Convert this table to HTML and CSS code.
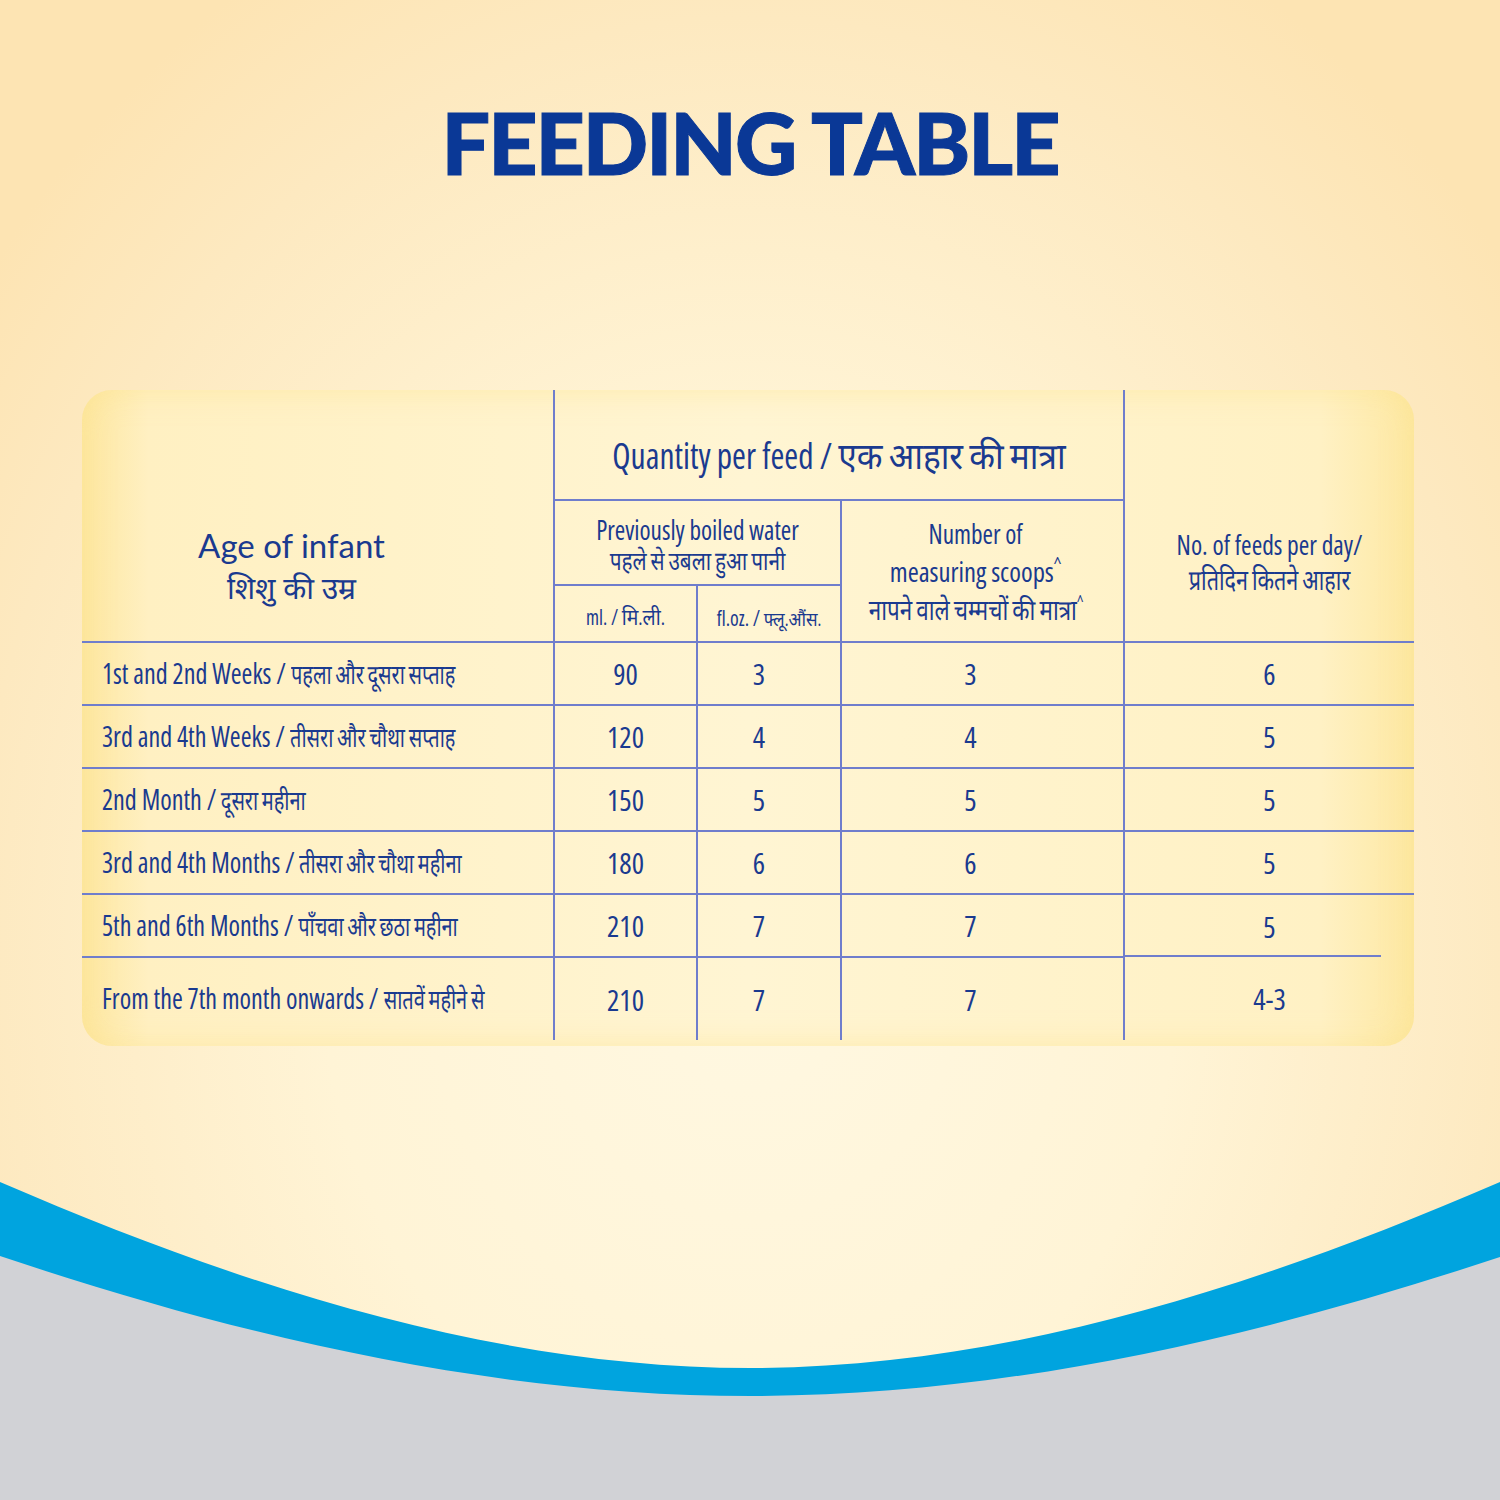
FILE: index.html
```html
<!DOCTYPE html>
<html lang="en">
<head>
<meta charset="utf-8">
<title>Feeding Table</title>
<link rel="stylesheet" href="styles.css">
</head>
<body>
<div class="page">
  <h1 class="title">FEEDING TABLE</h1>
  <div class="card">
    <table class="feed">
      <colgroup>
        <col class="c-age"><col class="c-ml"><col class="c-oz"><col class="c-scoop"><col class="c-feeds">
      </colgroup>
      <thead>
        <tr class="h1">
          <th rowspan="3" class="age"><span class="en">Age of infant</span><span class="hi">शिशु की उम्र</span></th>
          <th colspan="3" class="qty cond"><span class="bl s93">Quantity per feed / एक आहार की मात्रा</span></th>
          <th rowspan="3" class="feeds cond"><span class="bl s91">No. of feeds per day/</span><span class="bl s77">प्रतिदिन कितने आहार</span></th>
        </tr>
        <tr class="h2">
          <th colspan="2" class="water cond"><span class="bl s90">Previously boiled water</span><span class="bl s80 wh">पहले से उबला हुआ पानी</span></th>
          <th rowspan="2" class="scoops cond"><span class="bl ln s90">Number of</span><span class="bl ln s95">measuring scoops<sup class="caret">^</sup></span><span class="bl ln s80">नापने वाले चम्मचों की मात्रा<sup class="caret">^</sup></span></th>
        </tr>
        <tr class="h3">
          <th class="ml cond"><span class="bl s88">ml. / मि.ली.</span></th>
          <th class="oz cond"><span class="bl s90">fl.oz. / <span class="sm">फ्लू.औंस.</span></span></th>
        </tr>
      </thead>
      <tbody class="cond">
        <tr><td class="lbl"><span class="lt">1st and 2nd Weeks / <span class="dv">पहला और दूसरा सप्ताह</span></span></td><td>90</td><td class="n2">3</td><td class="n3">3</td><td>6</td></tr>
        <tr><td class="lbl"><span class="lt">3rd and 4th Weeks / <span class="dv">तीसरा और चौथा सप्ताह</span></span></td><td>120</td><td class="n2">4</td><td class="n3">4</td><td>5</td></tr>
        <tr><td class="lbl"><span class="lt">2nd Month / <span class="dv">दूसरा महीना</span></span></td><td>150</td><td class="n2">5</td><td class="n3">5</td><td>5</td></tr>
        <tr><td class="lbl"><span class="lt">3rd and 4th Months / <span class="dv">तीसरा और चौथा महीना</span></span></td><td>180</td><td class="n2">6</td><td class="n3">6</td><td>5</td></tr>
        <tr class="r5"><td class="lbl"><span class="lt">5th and 6th Months / <span class="dv">पाँचवा और छठा महीना</span></span></td><td>210</td><td class="n2">7</td><td class="n3">7</td><td class="short">5</td></tr>
        <tr class="last"><td class="lbl"><span class="lt">From the 7th month onwards / <span class="dv">सातवें महीने से</span></span></td><td>210</td><td class="n2">7</td><td class="n3">7</td><td>4-3</td></tr>
      </tbody>
    </table>
  </div>
  <svg class="wave" viewBox="0 0 1500 350" width="1500" height="350" aria-hidden="true">
    <path d="M0 32 C 250 140, 500 218, 750 218 C 1000 218, 1250 140, 1500 32 L1500 350 L0 350 Z" fill="#00a4df"/>
    <path d="M0 106 C 250 190, 500 246, 750 246 C 1000 246, 1250 190, 1500 107 L1500 350 L0 350 Z" fill="#d1d2d6"/>
  </svg>
</div>
</body>
</html>
```

FILE: styles.css
```css
* { box-sizing: border-box; }
html, body { margin: 0; padding: 0; }
body {
  width: 1500px;
  height: 1500px;
  overflow: hidden;
  background:
    radial-gradient(ellipse 950px 1150px at 50% 64%, #fff8e2 0%, #fff4d6 45%, #fde9c0 82%, #fde4b3 100%);
  font-family: "Open Sans", "Noto Sans Devanagari", "Lohit Devanagari", "FreeSans", sans-serif;
  color: #1a3a8f;
}
.page {
  height: 1500px;
  display: flex;
  flex-direction: column;
}
.title {
  margin: 99px 0 0;
  font-family: "Lato", sans-serif;
  font-weight: 900;
  font-size: 86px;
  line-height: 86px;
  letter-spacing: -2px;
  text-align: center;
  color: #0a3896;
  -webkit-text-stroke: 1px #0a3896;
}
.card {
  margin: 205px 0 0 82px;
  width: 1332px;
  height: 656px;
  border-radius: 30px;
  background: linear-gradient(90deg, #fde7a0 0%, #fff0c2 5%, #fff5d3 50%, #fff1c4 93%, #fde8a2 100%);
  box-shadow: inset 0 0 30px rgba(253, 226, 140, 0.55);
}
.feed {
  border-collapse: collapse;
  table-layout: fixed;
  width: 1332px;
}
.c-age { width: 472px; }
.c-ml { width: 143px; }
.c-oz { width: 144px; }
.c-scoop { width: 283px; }
.c-feeds { width: 290px; }

.feed th, .feed td {
  padding: 0;
  text-align: center;
  vertical-align: middle;
  font-weight: 400;
  white-space: nowrap;
  color: #1a3a8f;
}
.cond {
  font-family: "Open Sans", "Noto Sans Devanagari", "Lohit Devanagari", sans-serif;
  font-stretch: 75%;
}
.bl { display: block; transform-origin: 50% 50%; }
.s95 { transform: scaleX(0.95); }
.s93 { transform: scaleX(0.93); }
.s91 { transform: scaleX(0.91); }
.s90 { transform: scaleX(0.90); }
.s88 { transform: scaleX(0.88); }
.s80 { transform: scaleX(0.80); }
.s77 { transform: scaleX(0.77); }

.h1 { height: 110px; }
.h2 { height: 85px; }
.h3 { height: 57px; }
.feed tbody tr { height: 63px; }
.feed tbody tr.last { height: 83px; }

.feed th.age {
  border-right: 2px solid #6f7dcc;
  border-bottom: 2px solid #6f7dcc;
  font-family: "Lato", "Noto Sans Devanagari", sans-serif;
  padding: 100px 52px 0 0;
}
.age .en, .age .hi { display: block; font-size: 33px; line-height: 42px; }
.age .hi { font-size: 30px; }
.feed th.qty {
  border-right: 2px solid #6f7dcc;
  border-bottom: 2px solid #6f7dcc;
  font-size: 36px;
  padding-top: 26px;
}
.feed th.feeds {
  border-bottom: 2px solid #6f7dcc;
  font-size: 28px;
  line-height: 35px;
  padding-top: 92px;
}
.feed th.water {
  border-right: 2px solid #6f7dcc;
  border-bottom: 2px solid #6f7dcc;
  font-size: 28px;
  line-height: 30px;
  padding-top: 4px;
}
.water .wh { font-size: 26px; line-height: 32px; }
.feed th.scoops {
  border-right: 2px solid #6f7dcc;
  border-bottom: 2px solid #6f7dcc;
  font-size: 28px;
  padding-right: 14px;
}
.scoops .ln { line-height: 38px; }
.caret { font-size: 18px; vertical-align: 12px; line-height: 0; }
.feed th.ml, .feed th.oz {
  border-right: 2px solid #6f7dcc;
  border-bottom: 2px solid #6f7dcc;
  font-size: 22px;
  padding-top: 8px;
}
.sm { font-size: 19px; }

.feed tbody td {
  font-size: 29px;
  border-right: 2px solid #6f7dcc;
  border-bottom: 2px solid #6f7dcc;
}
.feed tbody td:last-child { border-right: none; }
.feed tbody tr.last td { border-bottom: none; }
.feed tbody td.lbl { text-align: left; padding-left: 20px; }
.lt {
  display: inline-block;
  transform: scaleX(0.9);
  transform-origin: 0 50%;
}
.dv {
  display: inline-block;
  font-size: 27px;
  transform: scaleX(0.82);
  transform-origin: 0 50%;
}
.feed tbody td.n2 { padding-right: 20px; }
.feed tbody td.n3 { padding-right: 24px; }
.feed tbody tr.r5 td.short {
  border-bottom: none;
  background: linear-gradient(#6f7dcc, #6f7dcc) left bottom / calc(100% - 33px) 2px no-repeat;
}

.wave {
  display: block;
  margin-top: auto;
  flex: none;
}
```
